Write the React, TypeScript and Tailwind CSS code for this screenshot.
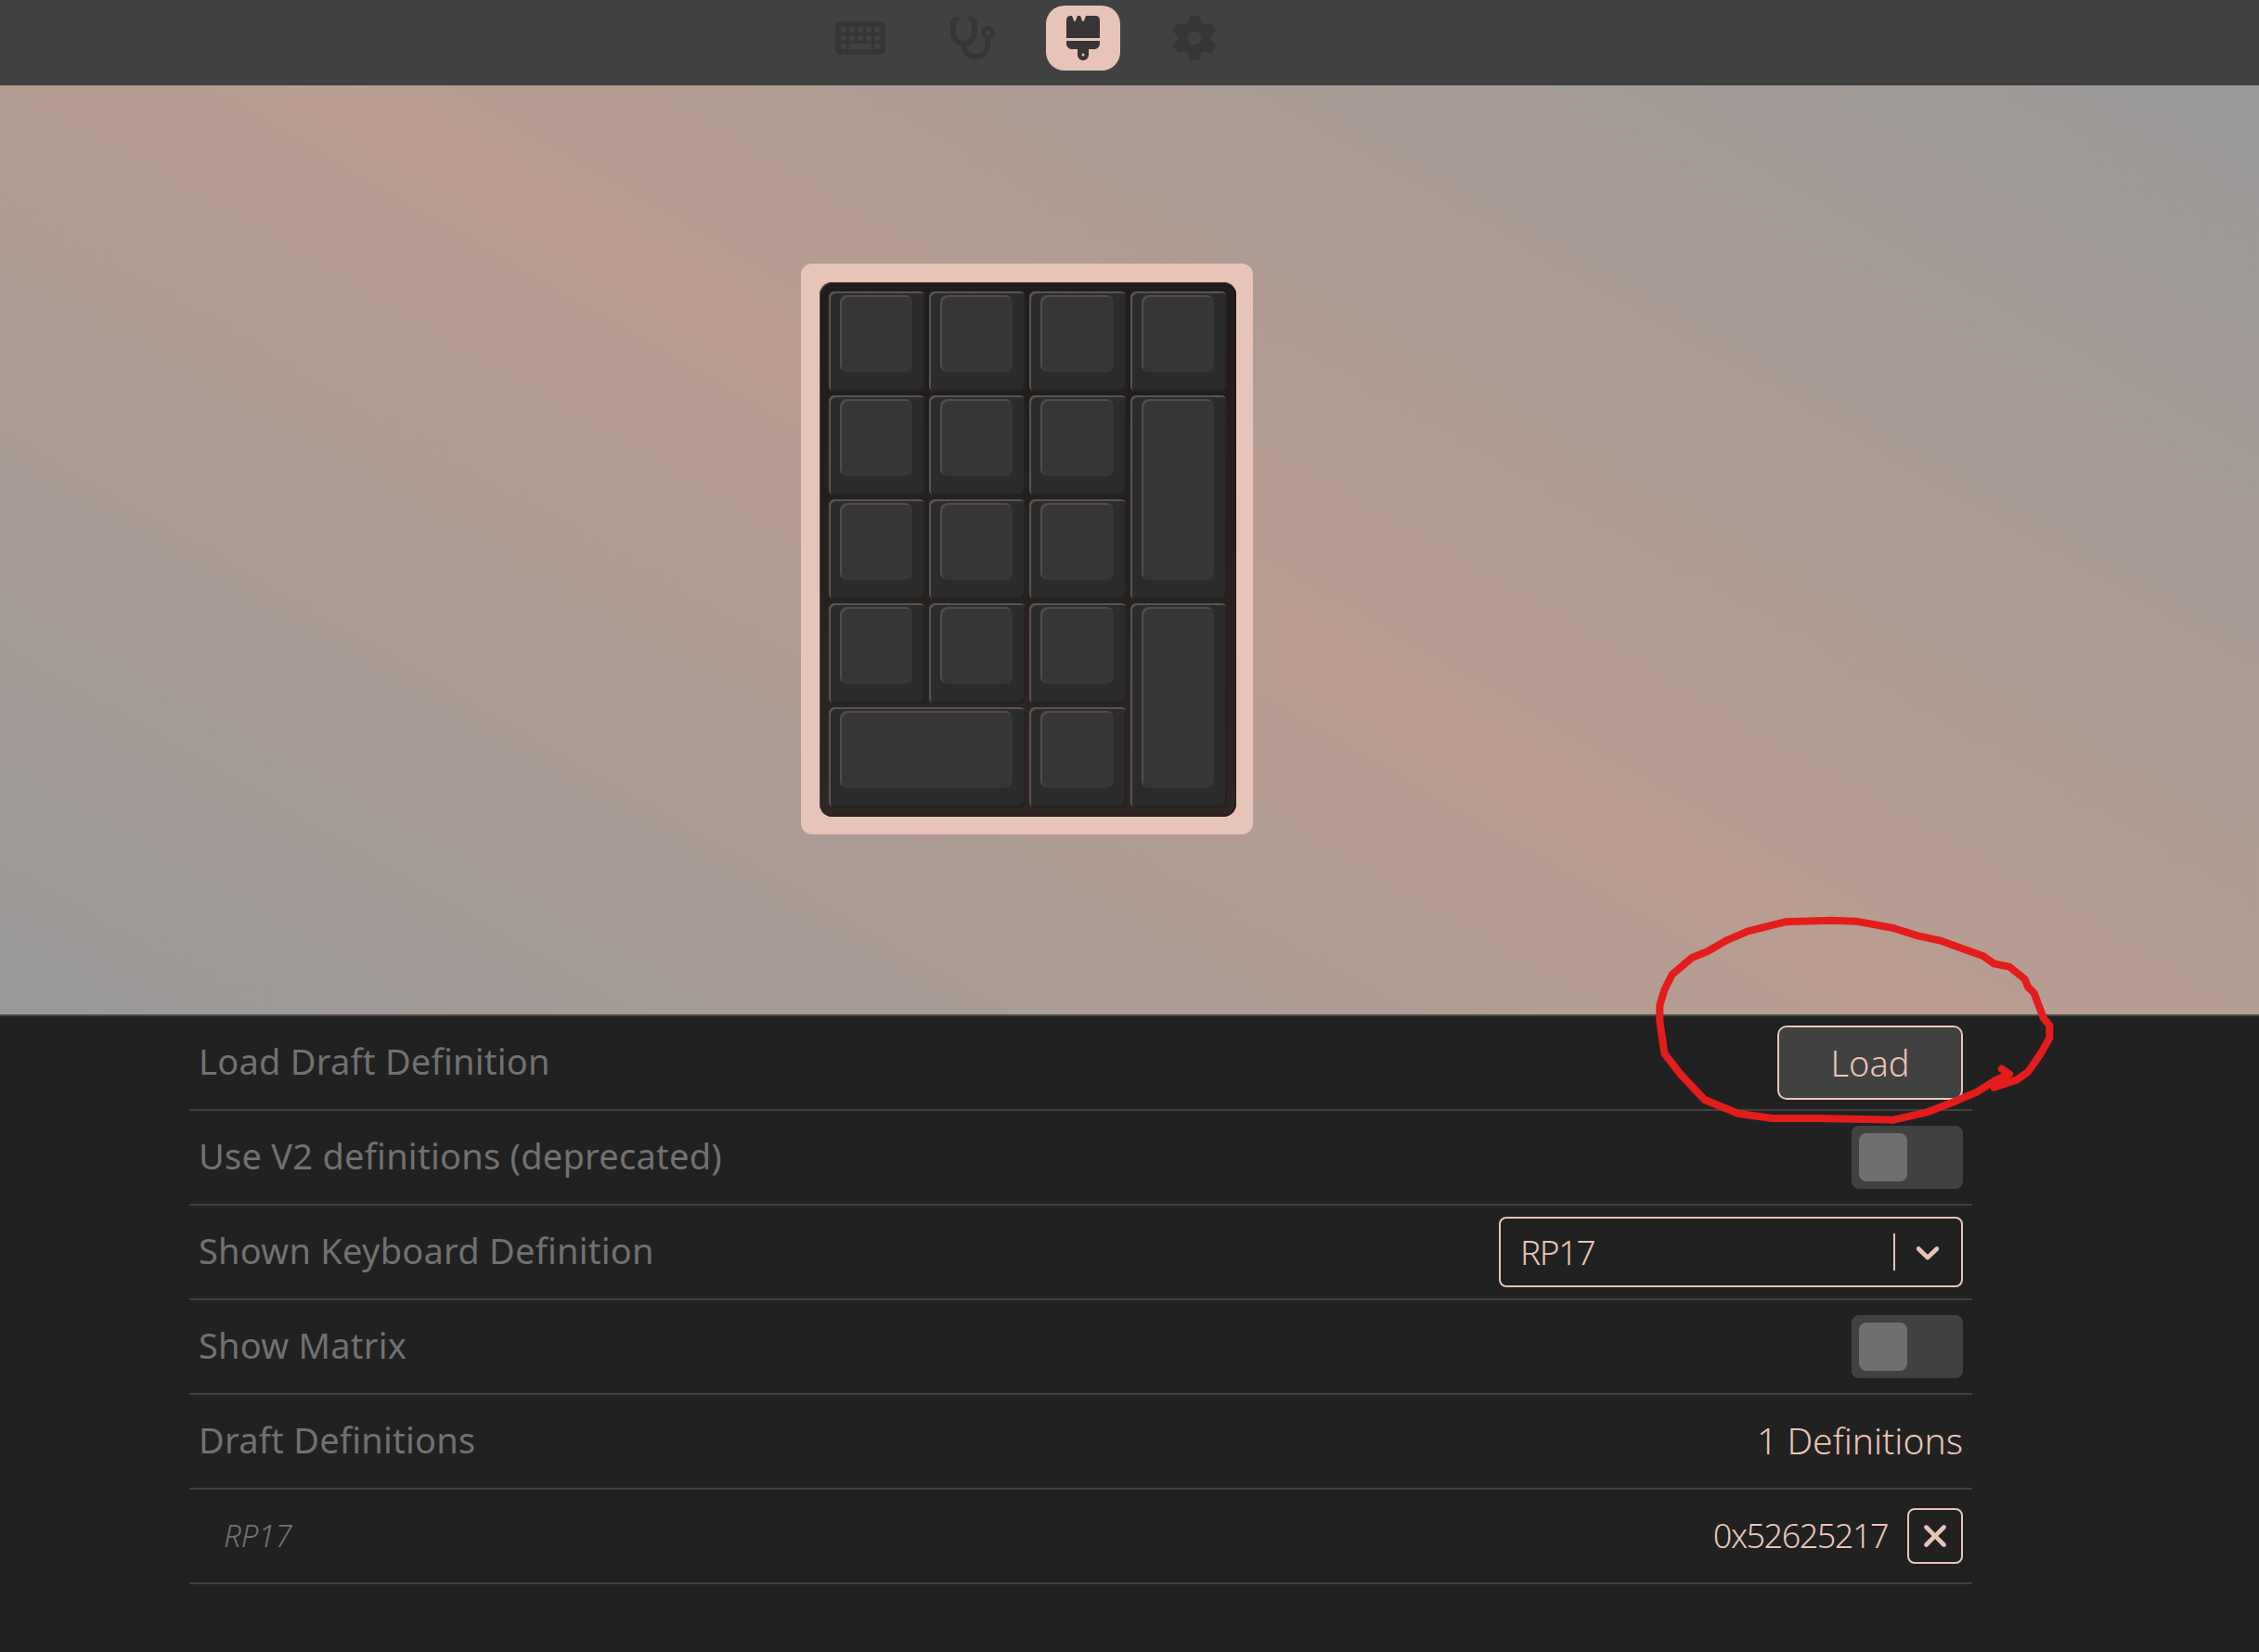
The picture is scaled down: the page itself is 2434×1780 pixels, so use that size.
import React from "react";
import { FaBrush, FaGear, FaKeyboard, FaStethoscope, FaXmark } from "react-icons/fa6";

const font = { fontFamily: '"Noto Sans", sans-serif' };

const navItems = [
  { icon: FaKeyboard, size: "text-[54px]", active: false },
  { icon: FaStethoscope, size: "text-[52px]", active: false },
  { icon: FaBrush, size: "text-[48px]", active: true },
  { icon: FaGear, size: "text-[48px]", active: false },
];

const keys = [
  "", "", "", "",
  "", "", "", "row-span-2",
  "", "", "",
  "", "", "", "row-span-2",
  "col-span-2", "",
];

const scribble =
  "M1190 575 L1215 592 L1165 615 L1110 650 L1040 680 L950 715 L840 740 L600 735 L450 735 L340 720 L230 675 L150 590 L100 525 L85 420 L85 370 L100 320 L125 270 L190 215 L240 195 L300 160 L370 130 L490 100 L640 95 L720 98 L840 120 L920 145 L990 160 L1060 185 L1130 210 L1165 235 L1215 245 L1265 285 L1275 310 L1295 330 L1325 410 L1345 435 L1345 475 L1320 520 L1300 550 L1275 585 L1240 610 L1165 635";

const Key = ({ className }: { className: string }) => (
  <div
    className={`flex rounded-[6px] bg-[#2b2b2b] pt-[4px] pl-[12px] pr-[14px] pb-[21px] shadow-[inset_2px_2px_0_#555555,inset_-2px_-2px_0_#232323] ${className}`}
  >
    <div className="flex-1 rounded-[8px] bg-[#373535] shadow-[inset_2px_2px_0_#4d4d4d]" />
  </div>
);

const Toggle = () => (
  <div className="flex h-[68px] w-[120px] items-center rounded-[8px] bg-[#414141] pl-[8px]">
    <div className="h-[52px] w-[52px] rounded-[8px] bg-[#6f6f6f]" />
  </div>
);

const Row = ({
  label,
  italic,
  children,
}: {
  label: string;
  italic?: boolean;
  children: React.ReactNode;
}) => (
  <div className="flex h-[102px] items-center justify-between border-b-2 border-[#414141] pl-[10px] pr-[10px]">
    {italic ? (
      <span className="pl-[27px] text-[33px] font-light italic text-[#717171]">{label}</span>
    ) : (
      <span className="-mt-[4px] text-[38px] tracking-[0.25px] text-[#717171]">{label}</span>
    )}
    {children}
  </div>
);

export default function App() {
  return (
    <div className="relative h-[1780px] overflow-hidden bg-[#212121]" style={font}>
      <div className="flex h-[92px] gap-[40px] bg-[#414141] pl-[887px] pt-[6px]">
        {navItems.map(({ icon: Icon, size, active }, i) => (
          <div
            key={i}
            className={`flex h-[70px] w-[80px] items-center justify-center rounded-[20px] text-[#373535] ${size} ${
              active ? "bg-[#e8c4b8]" : ""
            }`}
          >
            <Icon />
          </div>
        ))}
      </div>

      <div className="flex h-[1003px] items-center justify-center border-b-2 border-[#484848] bg-[linear-gradient(30deg,#999999_0%,#b99d90_50%,#999999_100%)] pb-[2px] pr-[222px]">
        <div className="rounded-[12px] bg-[#e8c4b8] pt-[20px] pb-[19px] pl-[20px] pr-[18px]">
          <div className="grid grid-cols-[104px_104px_105px_104px] grid-rows-[repeat(5,108px)] gap-[4px] rounded-[14px] bg-[linear-gradient(to_bottom,#211b19,#2f2522)] pt-[10px] pb-[10px] pl-[10px] pr-[10px] shadow-[inset_1px_1px_0_#4a4a4a,inset_-1px_-1px_0_#1c1c1c]">
            {keys.map((k, i) => (
              <Key key={i} className={k} />
            ))}
          </div>
        </div>
      </div>

      <div className="ml-[204px] w-[1921px]">
        <Row label="Load Draft Definition">
          <button className="flex h-[80px] w-[200px] items-center justify-center rounded-[10px] border-2 border-[#e8c4b8] bg-[#414141] text-[38px] font-light text-[#e8c4b8]">
            Load
          </button>
        </Row>
        <Row label="Use V2 definitions (deprecated)">
          <Toggle />
        </Row>
        <Row label="Shown Keyboard Definition">
          <div className="flex h-[76px] w-[500px] items-center rounded-[8px] border-2 border-[#e8c4b8] pl-[21px] pr-[15px] text-[#e8c4b8]">
            <span className="flex-1 text-[37px] font-light tracking-[-1.5px]">RP17</span>
            <div className="h-[40px] w-[2px] bg-[#e8c4b8]" />
            <svg viewBox="0 0 20 20" className="ml-[14px] h-[42px] w-[42px] fill-current">
              <path d="M4.516 7.548c0.436-0.446 1.043-0.481 1.576 0l3.908 3.747 3.908-3.747c0.533-0.481 1.141-0.446 1.574 0 0.436 0.445 0.408 1.197 0 1.615-0.406 0.418-4.695 4.502-4.695 4.502-0.217 0.223-0.502 0.335-0.787 0.335s-0.57-0.112-0.789-0.335c0 0-4.287-4.084-4.695-4.502s-0.436-1.17 0-1.615z" />
            </svg>
          </div>
        </Row>
        <Row label="Show Matrix">
          <Toggle />
        </Row>
        <Row label="Draft Definitions">
          <span className="-mt-[2px] text-[39px] font-light text-[#e8c4b8]">1 Definitions</span>
        </Row>
        <Row label="RP17" italic>
          <div className="flex items-center gap-[21px] text-[#e8c4b8]">
            <span className="text-[36px] font-light tracking-[-1.5px]">0x52625217</span>
            <div className="flex h-[60px] w-[60px] items-center justify-center rounded-[8px] border-2 border-[#e8c4b8] text-[38px]">
              <FaXmark />
            </div>
          </div>
        </Row>
      </div>

      {/* hand drawn annotation over the Load button */}
      <svg
        viewBox="0 0 1410 810"
        className="pointer-events-none absolute left-[1760px] top-[960px] h-[270px] w-[470px]"
      >
        <path
          d={scribble}
          fill="none"
          stroke="#e41c1c"
          strokeWidth="24"
          strokeLinejoin="round"
          strokeLinecap="round"
        />
      </svg>
    </div>
  );
}
